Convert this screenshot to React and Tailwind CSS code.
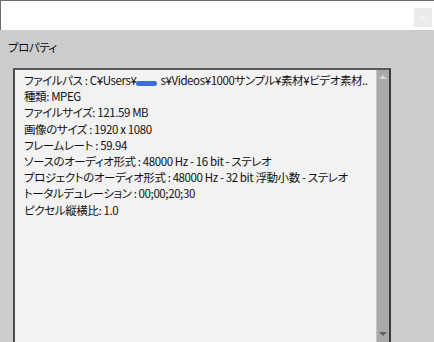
import React from "react"

const rows = [
  null,
  "種類: MPEG",
  "ファイルサイズ: 121.59 MB",
  "画像のサイズ : 1920 x 1080",
  "フレームレート : 59.94",
  "ソースのオーディオ形式 : 48000 Hz - 16 bit - ステレオ",
  "プロジェクトのオーディオ形式 : 48000 Hz - 32 bit 浮動小数 - ステレオ",
  "トータルデュレーション : 00;00;20;30",
  "ピクセル縦横比: 1.0",
]

export default function App() {
  return (
    <div
      className="flex h-[342px] w-[434px] flex-col overflow-hidden bg-white text-[12px] text-[#111] [font-family:'Noto_Sans_CJK_JP',sans-serif] [font-feature-settings:'palt']"
    >
      {/* title strip */}
      <div className="flex h-[30px] shrink-0 items-start justify-end border-l border-t border-[#6e6e6e] pr-[2px] pt-[7px]">
        <div className="flex h-[19px] w-[18px] items-center justify-center bg-[#ebebeb] text-[10px] leading-none text-[#f8f8f8]">
          ×
        </div>
      </div>

      {/* properties panel */}
      <div className="flex flex-1 flex-col bg-[#cccccc]">
        <div className="flex h-[38px] items-center pl-[8px] pb-[3px] text-[11.5px] tracking-[-0.5px]">プロパティ</div>

        <div className="ml-[13px] flex w-[378px] flex-1 border-l-2 border-t-2 border-r-2 border-l-[#4a4a4a] border-t-[#5a5a5a] border-r-[#3a3a3a]">
          <div className="flex-1 bg-[#f2f2f2] pl-[9px] pt-[2px] text-[11.5px]">
            {rows.map((r, i) => (
              <div key={i} className="h-[16.2px] whitespace-pre leading-[16px] tracking-[-0.4px]">
                {r ?? (
                  <>
                    ファイルパス : C¥Users¥
                    <span className="relative inline-block w-[24px]">
                      <span className="absolute left-[0px] top-[-4px] h-[5px] w-[21px] rounded-full bg-[#3b6fd6]" />
                    </span>
                    s¥Videos¥1000サンプル¥素材¥ビデオ素材..
                  </>
                )}
              </div>
            ))}
          </div>

          {/* scrollbar */}
          <div className="flex w-[13px] flex-col items-center justify-between border-l border-[#c4c4c4] bg-[#a9a9a9] pt-[5px] pb-[6px]">
            <div className="h-0 w-0 border-x-[4px] border-b-[4px] border-x-transparent border-b-[#d8d8d8]" />
            <div className="h-0 w-0 border-x-[4px] border-t-[4px] border-x-transparent border-t-[#606060]" />
          </div>
        </div>
      </div>
    </div>
  )
}
